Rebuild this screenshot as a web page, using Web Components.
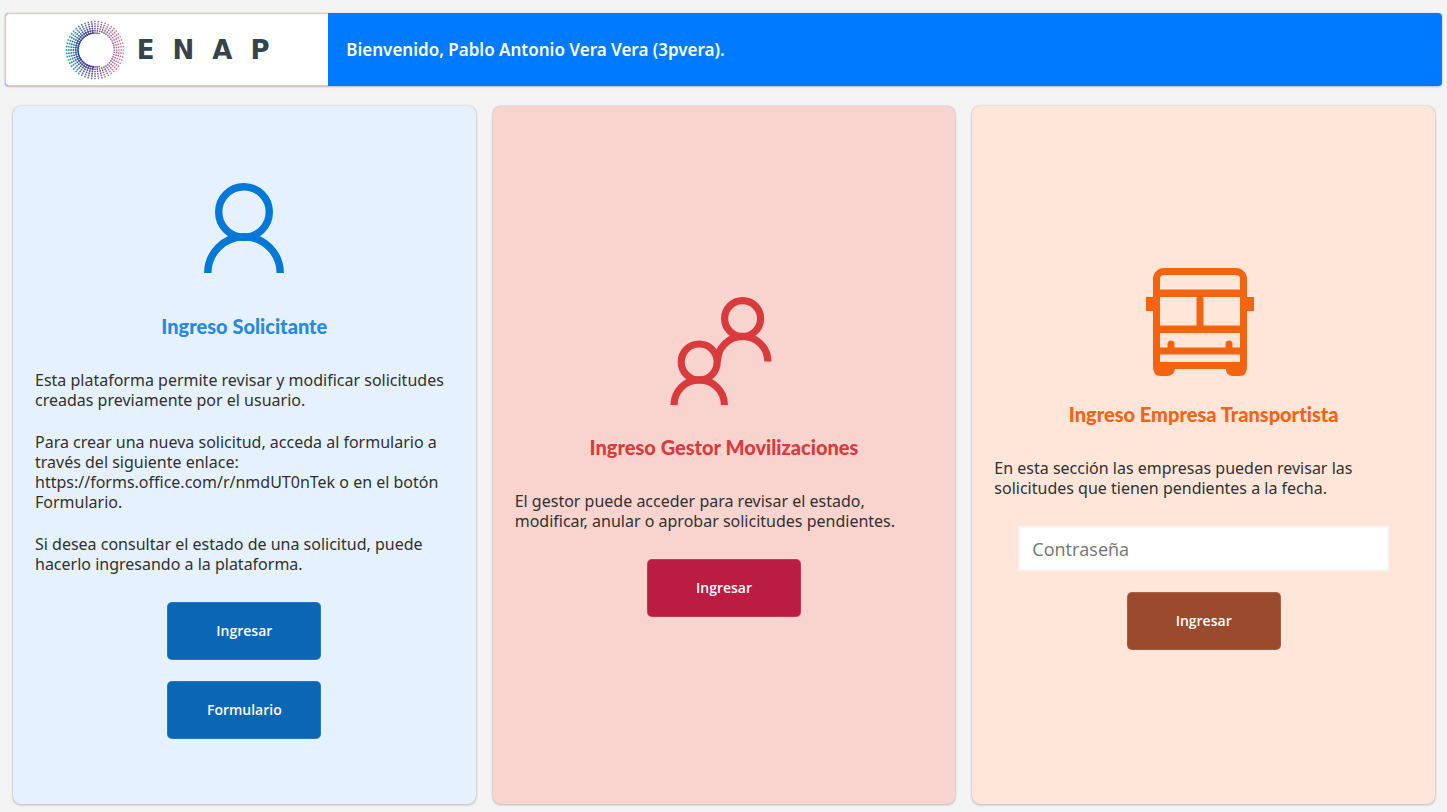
<!DOCTYPE html>
<html lang="es">
<head>
<meta charset="utf-8">
<meta name="viewport" content="width=device-width, initial-scale=1">
<title>ENAP</title>
<style>
  body { margin: 0; background: #f4f4f4; }
</style>
</head>
<body>
<portal-app></portal-app>
<script>
const define = (name, html, setup) => {
  const template = document.createElement('template');
  template.innerHTML = html;
  customElements.define(name, class extends HTMLElement {
    constructor() {
      super();
      this.attachShadow({ mode: 'open' }).append(template.content.cloneNode(true));
      if (setup) setup(this, this.shadowRoot);
    }
  });
};

/* Brand mark: a ring of dots, teal on the left, pink on the right */
define('enap-logo', `
  <style>
    :host { display: flex; align-items: center; justify-content: center; gap: 12px; }
    svg { display: block; width: 60px; height: 60px; }
    span { font: bold 26px/30px "DejaVu Sans", sans-serif; color: #36424c; white-space: pre; }
  </style>
  <svg viewBox="-30 -30 60 60" aria-hidden="true"></svg>
  <span>E  N  A  P</span>`, (host, root) => {
  const svg = root.querySelector('svg');
  const blend = (a, b, f) => a.map((c, k) => Math.round(c + (b[k] - c) * f));
  let dots = '';
  for (let a = 0; a < 52; a++) {
    const angle = a * Math.PI / 26;
    const side = (1 - Math.cos(angle)) / 2;
    const inner = side > .5 ? blend([70, 50, 130], [44, 70, 150], side * 2 - 1) : blend([150, 90, 165], [70, 50, 130], side * 2);
    const outer = side > .5 ? blend([140, 110, 180], [40, 160, 175], side * 2 - 1) : blend([232, 120, 145], [140, 110, 180], side * 2);
    for (let r = 0; r < 6; r++) {
      if (side < .35 && r === 0) continue;
      const radius = 17 + r * 2.3;
      const size = side > .55 ? (r < 2 ? 1.1 : .95) : .85;
      dots += `<circle cx="${(radius * Math.cos(angle)).toFixed(2)}" cy="${(radius * Math.sin(angle)).toFixed(2)}" r="${size}" fill="rgb(${blend(inner, outer, r / 5).join()})"/>`;
    }
  }
  svg.innerHTML = dots;
});

define('portal-header', `
  <style>
    :host { display: flex; min-height: 73px; border-radius: 4px; overflow: hidden; background: #007bff;
            box-shadow: 0 0 2px rgba(0,0,0,.15), 0 1px 2px rgba(0,0,0,.2); }
    .brand { flex: 0 0 22.5%; box-sizing: border-box; display: flex; align-items: center; justify-content: center;
             background: #fff; border: 1px solid #b3d7ff; border-right: 0; border-radius: 4px 0 0 4px; }
    .welcome { flex: 1; display: flex; align-items: center; padding: 0 18px; }
    h1 { margin: 0; font: 600 17px/24px "Noto Sans", sans-serif; color: #fff; }
  </style>
  <div class="brand"><enap-logo></enap-logo></div>
  <div class="welcome"><h1><slot></slot></h1></div>`);

define('action-button', `
  <style>
    :host { display: block; }
    button { display: block; width: 154px; height: 58px; padding: 0; border: 1px solid rgba(255,255,255,.12); border-radius: 5px;
             background: var(--action); color: #fff; font: 600 14px/20px "Open Sans", sans-serif; cursor: pointer; }
  </style>
  <button type="button"><slot></slot></button>`);

define('password-field', `
  <style>
    :host { display: block; align-self: stretch; margin: 0 24px; }
    input { display: block; box-sizing: border-box; width: 100%; height: 45px; padding: 0 12px; border: 2px solid #f3f5f7;
            background: #fff; color: #323130; font: 18px/24px "Open Sans", sans-serif; }
    input::placeholder { color: #757575; opacity: 1; }
  </style>
  <input type="password" placeholder="Contraseña" aria-label="Contraseña">`);

define('access-card', `
  <style>
    :host { flex: 1 1 0; min-width: 0; box-sizing: border-box; display: flex; flex-direction: column; align-items: center; justify-content: center;
            padding: 16px 22px; border-radius: 8px; background: var(--surface);
            box-shadow: 0 0 2px rgba(0,0,0,.2), 0 1px 3px rgba(0,0,0,.2); }
    h2 { margin: 26px 0 32px; font: 900 20px/24px Lato, sans-serif; font-variant-ligatures: none; color: var(--accent); text-align: center; }
    .text { align-self: stretch; display: flex; flex-direction: column; gap: 22px; margin-bottom: 28px;
            font: 16px/20px "Noto Sans", sans-serif; color: #323130; }
    .actions { align-self: stretch; display: flex; flex-direction: column; align-items: center; gap: 21px; }
    ::slotted(svg) { display: block; width: 116px; height: 116px; }
    ::slotted(p) { margin: 0; }
  </style>
  <slot name="icon"></slot>
  <h2><slot name="title"></slot></h2>
  <div class="text"><slot name="text"></slot></div>
  <div class="actions"><slot></slot></div>`);

define('portal-app', `
  <style>
    :host { display: flex; flex-direction: column; gap: 20px; box-sizing: border-box; min-height: 100vh; padding: 13px 5px 8px; }
    main { flex: 1; display: flex; gap: 17px; padding: 0 7px 0 8px; }
    .request { --surface: #e5f1ff; --accent: #2988e1; --action: #0b66b5; }
    .manager { --surface: #f9d4cf; --accent: #d83b3e; --action: #ba1c42; }
    .carrier { --surface: #ffe6d9; --accent: #f56314; --action: #9c4a2d; }
  </style>
  <portal-header>Bienvenido, Pablo Antonio Vera Vera (3pvera).</portal-header>
  <main>
    <access-card class="request">
      <svg slot="icon" viewBox="0 0 116 116" fill="none" stroke="#0078d7" stroke-width="7.4" aria-hidden="true">
        <circle cx="58" cy="40" r="25.3"/><path d="M21.8 101a36.2 36.2 0 0 1 72.4 0"/>
      </svg>
      <span slot="title">Ingreso Solicitante</span>
      <p slot="text">Esta plataforma permite revisar y modificar solicitudes<br>creadas previamente por el usuario.</p>
      <p slot="text">Para crear una nueva solicitud, acceda al formulario a<br>través del siguiente enlace:<br>https://forms.office.com/r/nmdUT0nTek o en el botón<br>Formulario.</p>
      <p slot="text">Si desea consultar el estado de una solicitud, puede<br>hacerlo ingresando a la plataforma.</p>
      <action-button>Ingresar</action-button>
      <action-button>Formulario</action-button>
    </access-card>
    <access-card class="manager">
      <svg slot="icon" viewBox="0 0 116 116" fill="none" stroke="#d93b3d" stroke-width="7.2" aria-hidden="true">
        <circle cx="76.6" cy="25.6" r="18"/><circle cx="33.2" cy="69" r="18"/>
        <path d="M51.5 68.6a25.2 25.2 0 0 1 50.4 0M8 112a25.2 25.2 0 0 1 50.4 0"/>
      </svg>
      <span slot="title">Ingreso Gestor Movilizaciones</span>
      <p slot="text">El gestor puede acceder para revisar el estado,<br>modificar, anular o aprobar solicitudes pendientes.</p>
      <action-button>Ingresar</action-button>
    </access-card>
    <access-card class="carrier">
      <svg slot="icon" viewBox="0 0 116 116" fill="#f26411" fill-rule="evenodd" aria-hidden="true">
        <path d="M18 8H90A11 11 0 0 1 101 19V37H108V51H101V106Q101 116 94 116H87Q80 116 80 109H29Q28 116 21 116H14Q7 116 7 106V51H0V37H7V19A11 11 0 0 1 18 8ZM18 15Q14 15 14 19V29.500H94V19Q94 15 90 15ZM14 37V65.500H50.500V37ZM57.500 37V65.500H94V37ZM14 73V87.500H21.500V84A3.500 3.500 0 0 1 28.500 84V87.500H79.500V84A3.500 3.500 0 0 1 86.500 84V87.500H94V73ZM14 94.500V102H94V94.500Z"/>
      </svg>
      <span slot="title">Ingreso Empresa Transportista</span>
      <p slot="text">En esta sección las empresas pueden revisar las<br>solicitudes que tienen pendientes a la fecha.</p>
      <password-field></password-field>
      <action-button>Ingresar</action-button>
    </access-card>
  </main>`);
</script>
</body>
</html>
